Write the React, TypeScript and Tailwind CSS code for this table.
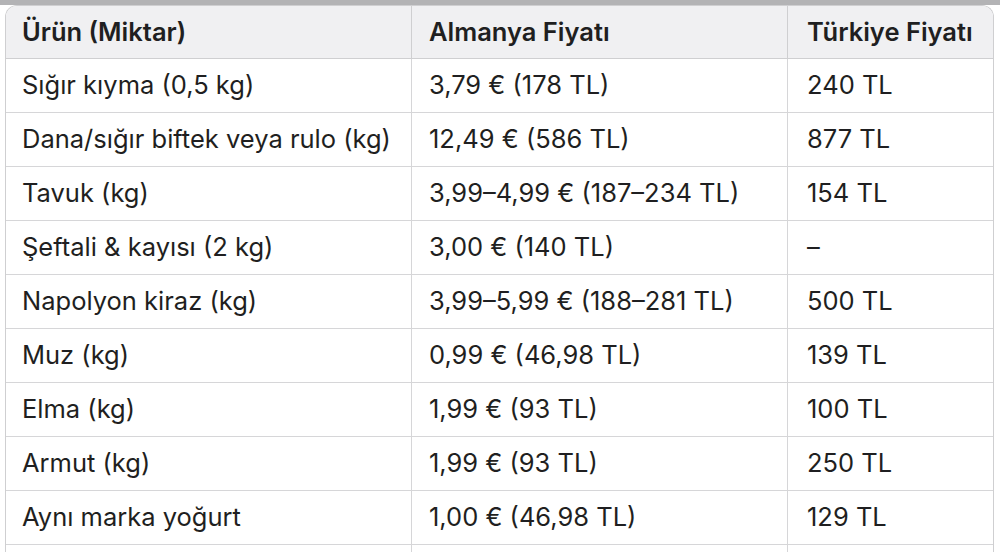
const rows: [string, string, string][] = [
  ['Sığır kıyma (0,5 kg)', '3,79 € (178 TL)', '240 TL'],
  ['Dana/sığır biftek veya rulo (kg)', '12,49 € (586 TL)', '877 TL'],
  ['Tavuk (kg)', '3,99–4,99 € (187–234 TL)', '154 TL'],
  ['Şeftali & kayısı (2 kg)', '3,00 € (140 TL)', '–'],
  ['Napolyon kiraz (kg)', '3,99–5,99 € (188–281 TL)', '500 TL'],
  ['Muz (kg)', '0,99 € (46,98 TL)', '139 TL'],
  ['Elma (kg)', '1,99 € (93 TL)', '100 TL'],
  ['Armut (kg)', '1,99 € (93 TL)', '250 TL'],
  ['Aynı marka yoğurt', '1,00 € (46,98 TL)', '129 TL'],
  ['', '', ''],
];

export default function App() {
  return (
    <div className="w-[1000px] h-[552px] overflow-hidden bg-white text-[#1f1f21] font-['Inter',sans-serif]">
      <div className="h-[5px] bg-[#b3b3b5]" />
      <div className="ml-[5px] w-[989px] rounded-t-[12px] border-l border-r border-t border-[#cfcfd1] overflow-hidden">
        <div className="grid grid-cols-[406px_376px_1fr] h-[53px] bg-[#f0f0f2] border-b border-[#cfcfd1] font-semibold text-[25.5px]">
          <div className="flex items-center pl-[16px] border-r border-[#cfcfd1]">Ürün (Miktar)</div>
          <div className="flex items-center pl-[17px] border-r border-[#cfcfd1]">Almanya Fiyatı</div>
          <div className="flex items-center pl-[19px]">Türkiye Fiyatı</div>
        </div>
        {rows.map((r, i) => (
          <div key={i} className="grid grid-cols-[406px_376px_1fr] h-[54px] border-b border-[#d6d6d8] text-[25.5px]">
            <div className="flex items-center pl-[16px] border-r border-[#d6d6d8]">{r[0]}</div>
            <div className="flex items-center pl-[17px] border-r border-[#d6d6d8]">{r[1]}</div>
            <div className="flex items-center pl-[19px]">{r[2]}</div>
          </div>
        ))}
      </div>
    </div>
  );
}
